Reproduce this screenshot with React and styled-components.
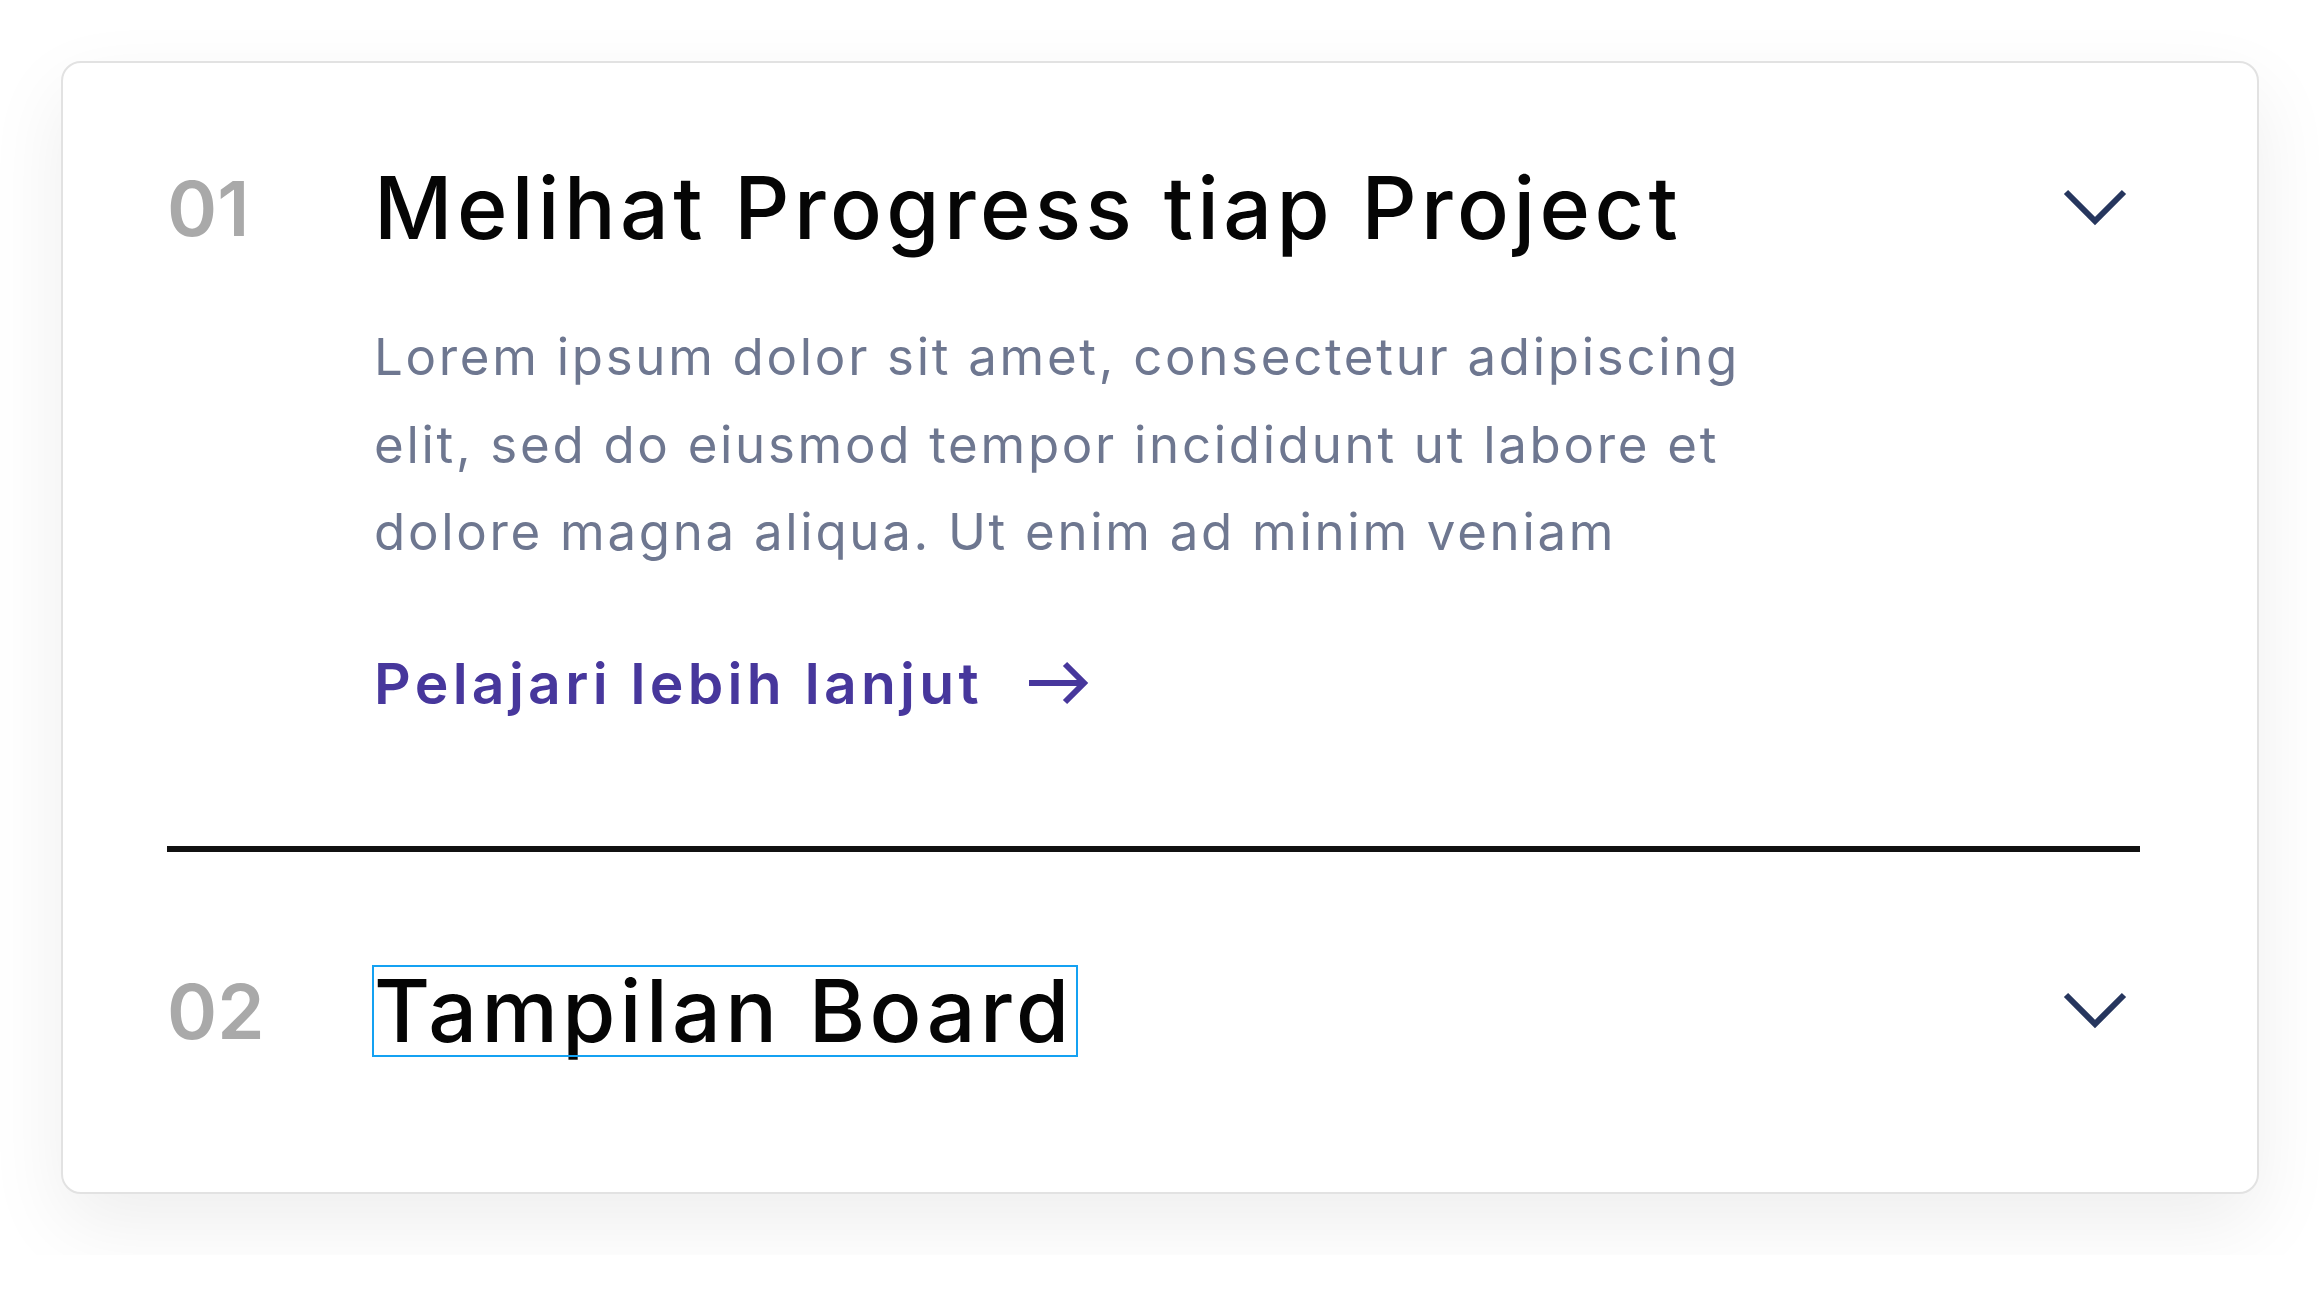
import React from "react";
import styled, { createGlobalStyle } from "styled-components";

const GlobalStyle = createGlobalStyle`
  html, body {
    margin: 0;
    padding: 0;
    background: #ffffff;
  }
  body {
    font-family: "Inter", "Liberation Sans", sans-serif;
  }
`;

const Page = styled.div`
  padding: 61px;
`;

const Card = styled.div`
  background: #ffffff;
  border: 2px solid #e2e2e2;
  border-radius: 20px;
  box-shadow: 0 30px 80px rgba(0, 0, 0, 0.07);
  padding: 99px 117px 135px 104px;
`;

const Item = styled.div`
  padding-top: ${(p) => (p.$first ? "0" : "113px")};
  padding-bottom: ${(p) => (p.$last ? "0" : "129px")};
  border-bottom: ${(p) => (p.$last ? "none" : "6px solid #111111")};
`;

const Header = styled.div`
  display: grid;
  grid-template-columns: 205px 1fr auto;
  align-items: center;
`;

const Number = styled.span`
  font-size: 76px;
  font-weight: 600;
  line-height: 92px;
  color: #a9a9a9;
`;

const Title = styled.h2`
  justify-self: start;
  margin: 0;
  font-size: 86px;
  font-weight: 500;
  line-height: 92px;
  letter-spacing: 4.4px;
  color: #050505;
  outline: ${(p) => (p.$focused ? "2px solid #14a1f2" : "none")};
  outline-offset: -2px;
  padding: 0 4px 0 2px;
`;

const Toggle = styled.button`
  display: flex;
  align-items: center;
  justify-content: center;
  background: none;
  border: none;
  padding: 0;
  margin-right: 10px;
  color: #26365e;
  cursor: pointer;
`;

const Body = styled.div`
  padding-left: 207px;
`;

const Text = styled.p`
  margin: 59px 0 0;
  max-width: 1430px;
  font-size: 51px;
  line-height: 87.5px;
  letter-spacing: 2.7px;
  color: #6e7790;
`;

const MoreLink = styled.a`
  display: inline-flex;
  align-items: center;
  margin-top: 74px;
  font-size: 57px;
  font-weight: 600;
  line-height: 67px;
  letter-spacing: 4.3px;
  color: #47379c;
  text-decoration: none;
  svg {
    margin-left: 46px;
  }
`;

const Chevron = () => (
  <svg width="70" height="44" viewBox="0 0 70 44" fill="none">
    <polyline
      points="6,6 35,35 64,6"
      stroke="currentColor"
      strokeWidth="6"
      strokeLinecap="butt"
      strokeLinejoin="miter"
    />
  </svg>
);

const Arrow = () => (
  <svg width="60" height="44" viewBox="0 0 60 44" fill="none">
    <path d="M0 22 H55" stroke="currentColor" strokeWidth="6" />
    <path
      d="M36 3 L55 22 L36 41"
      stroke="currentColor"
      strokeWidth="6"
      strokeLinejoin="miter"
    />
  </svg>
);

const items = [
  {
    num: "01",
    title: "Melihat Progress tiap Project",
    text:
      "Lorem ipsum dolor sit amet, consectetur adipiscing elit, sed do eiusmod tempor incididunt ut labore et dolore magna aliqua. Ut enim ad minim veniam",
    open: true,
  },
  {
    num: "02",
    title: "Tampilan Board",
    focused: true,
  },
];

export default function App() {
  return (
    <>
      <GlobalStyle />
      <Page>
        <Card>
          {items.map((item, i) => (
            <Item key={item.num} $first={i === 0} $last={i === items.length - 1}>
              <Header>
                <Number>{item.num}</Number>
                <Title $focused={item.focused}>{item.title}</Title>
                <Toggle aria-label="toggle">
                  <Chevron />
                </Toggle>
              </Header>
              {item.open && (
                <Body>
                  <Text>{item.text}</Text>
                  <MoreLink href="#">
                    Pelajari lebih lanjut
                    <Arrow />
                  </MoreLink>
                </Body>
              )}
            </Item>
          ))}
        </Card>
      </Page>
    </>
  );
}
